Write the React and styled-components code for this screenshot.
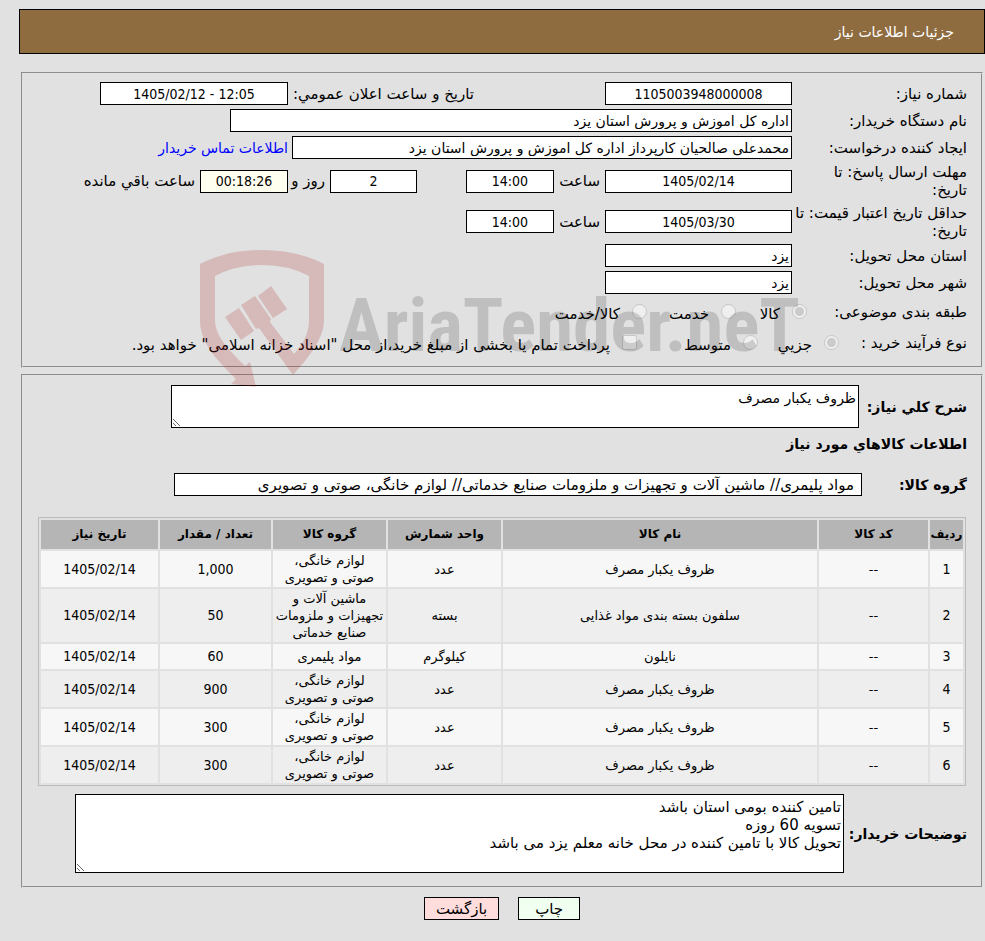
import React from "react";
import styled, { createGlobalStyle } from "styled-components";

const GlobalStyle = createGlobalStyle`
  *, *::before, *::after { box-sizing: border-box; }
  body {
    margin: 0;
    background: #e1e1e1;
    color: #000;
    font-family: "DejaVu Sans", sans-serif;
    font-size: 15px;
    line-height: 18px;
  }
  input, textarea, button { font: inherit; color: inherit; }
`;

const numeric = `"DejaVu Sans Condensed", "DejaVu Sans", sans-serif`;

const Page = styled.main`
  padding: 9px 0 21px 19px;
`;

const TitleBar = styled.h1`
  margin: 0 0 18px;
  padding: 14px 30px 12px;
  border: 1px solid #000;
  background: #8f6c40;
  color: #fff;
  font-size: 14px;
  font-weight: 400;
  line-height: 17px;
`;

const Panel = styled.fieldset`
  min-width: 0;
  margin: 0 2px 6px;
  padding: ${(p) => p.$pad};
  border: 2px groove #e1e1e1;
`;

const NeedPanel = styled(Panel)`
  position: relative;
`;

const Row = styled.div`
  display: flex;
  align-items: center;
  min-height: ${(p) => p.$h || 27}px;
`;

const Label = styled.label`
  flex: 0 0 175px;
  white-space: nowrap;
`;

const GroupName = styled.span`
  flex: 0 0 ${(p) => p.$w}px;
`;

const Field = styled.input`
  flex: 0 ${(p) => (p.$shrink ? 1 : 0)} ${(p) => p.$w}px;
  width: ${(p) => p.$w}px;
  min-width: 0;
  height: 23px;
  padding: 1px 2px;
  border: 1px solid #000;
  border-radius: 0;
  background: #fff;
  font-size: 14px;
  text-align: right;
`;

const NumberField = styled(Field)`
  background: ${(p) => (p.$warm ? "#fffff0" : "#fff")};
  font-family: ${numeric};
  text-align: center;
`;

const GroupField = styled(Field)`
  padding: 1px 7px;
  font-size: 15px;
`;

const Between = styled.label`
  flex: 0 0 ${(p) => p.$w}px;
  padding-right: 5px;
  white-space: nowrap;
`;

const Spacer = styled.span`
  flex: 0 0 ${(p) => p.$w}px;
`;

const ContactLink = styled.a`
  padding-right: 4px;
  color: #00f;
  font-size: 14px;
  text-decoration: none;
  white-space: nowrap;
`;

const Option = styled.label`
  display: flex;
  flex: 0 0 ${(p) => p.$w};
  align-items: center;
  gap: 12px;
  white-space: nowrap;

  input {
    width: 15px;
    height: 15px;
    margin: 0;
  }
  span { padding-top: 5px; }
`;

const Strong = styled.label`
  flex: 0 0 ${(p) => p.$w}px;
  font-size: 14px;
  font-weight: 700;
  white-space: nowrap;
`;

const SubHeading = styled.h2`
  margin: 7px 0 20px;
  font-size: 14px;
  font-weight: 700;
  line-height: 18px;
`;

const Area = styled.textarea`
  flex: 0 1 ${(p) => p.$w}px;
  min-width: 0;
  height: ${(p) => p.$h}px;
  padding: 3px 2px;
  border: 1px solid #000;
  background: #fff;
  font-size: ${(p) => p.$size}px;
  overflow: hidden;
`;

const Goods = styled.table`
  width: calc(100% - 1px);
  margin: 21px 1px 8px 0;
  border: 1px solid #bbb;
  border-spacing: 2px;
  table-layout: fixed;
  font-size: 13px;
  line-height: 17px;
  text-align: center;

  th {
    height: 29px;
    padding: 0;
    background: #b5b5b5;
    font-size: 12px;
    font-weight: 700;
    white-space: nowrap;
  }
  td {
    height: 25px;
    padding: 1px;
    background: #f7f7f7;
    white-space: pre-line;
  }
  tbody tr:nth-child(even) td { background: #eee; }
`;

const NumberCell = styled.td`
  font-family: ${numeric};
  font-size: 14px;
`;

const Col = styled.col`
  width: ${(p) => p.$w};
`;

const Actions = styled.div`
  display: flex;
  justify-content: center;
  gap: 19px;
  padding-top: 3px;
`;

const Action = styled.button`
  height: 23px;
  padding: 0 ${(p) => p.$pad}px;
  border: 1px solid #000;
  background: ${(p) => p.$bg};
`;

const Watermark = styled.svg`
  position: absolute;
  top: 174px;
  left: 176px;
  pointer-events: none;
`;

const appliances = "لوازم خانگی،\nصوتی و تصویری";

const goods = [
  ["ظروف یکبار مصرف", "عدد", appliances, "1,000"],
  ["سلفون بسته بندی مواد غذایی", "بسته", "ماشین آلات و\nتجهیزات و ملزومات\nصنایع خدماتی", "50"],
  ["نایلون", "کیلوگرم", "مواد پلیمری", "60"],
  ["ظروف یکبار مصرف", "عدد", appliances, "900"],
  ["ظروف یکبار مصرف", "عدد", appliances, "300"],
  ["ظروف یکبار مصرف", "عدد", appliances, "300"],
];

function Brand() {
  return (
    <Watermark width="604" height="140" viewBox="0 0 604 140" aria-hidden="true">
      <g fill="rgb(170,25,25)" fillOpacity="0.2">
        <path d="M1 16 Q28 2 63 2 Q98 2 125 16 V72 C125 92 107 112 94 127 L60 80 L57 81 L42 57 L56 48 L72 71 L71 74 L95 106 C104 96 110 86 110 72 V28 Q90 17 63 17 Q36 17 16 28 V72 C16 89 32 104 46 118 L51 114 L57 139 L32 136 L37 131 C16 110 1 94 1 72 Z" />
        <path d="M26 69 L40 60 L55 83 L42 92 Z M59 48 L72 38 L88 61 L74 70 Z" />
      </g>
      <text
        x="140"
        y="103"
        direction="ltr"
        fill="#000"
        fillOpacity="0.15"
        fontFamily="'Roboto Condensed', 'Open Sans Condensed', Roboto, sans-serif"
        fontSize="75"
        fontWeight="700"
      >
        AriaTender.neT
      </text>
    </Watermark>
  );
}

export default function App() {
  return (
    <>
      <GlobalStyle />
      <Page dir="rtl" lang="fa">
        <TitleBar>جزئیات اطلاعات نیاز</TitleBar>

        <NeedPanel $pad="6px 14px 8px 11px">
          <Row>
            <Label htmlFor="number">شماره نیاز:</Label>
            <NumberField id="number" $w={187} readOnly defaultValue="1105003948000008" />
            <Spacer $w={126} />
            <Between $w={191} htmlFor="announced">تاریخ و ساعت اعلان عمومي:</Between>
            <NumberField id="announced" dir="ltr" $w={188} readOnly defaultValue="1405/02/12 - 12:05" />
          </Row>
          <Row>
            <Label htmlFor="buyer">نام دستگاه خریدار:</Label>
            <Field id="buyer" $w={562} $shrink readOnly defaultValue="اداره کل اموزش و پرورش استان یزد" />
          </Row>
          <Row>
            <Label htmlFor="creator">ایجاد کننده درخواست:</Label>
            <Field id="creator" $w={500} $shrink readOnly defaultValue="محمدعلی صالحیان کارپرداز اداره کل اموزش و پرورش استان یزد" />
            <ContactLink href="#contact">اطلاعات تماس خریدار</ContactLink>
          </Row>
          <Row $h={40}>
            <Label htmlFor="deadline">مهلت ارسال پاسخ: تا<br />تاریخ:</Label>
            <NumberField id="deadline" $w={187} readOnly defaultValue="1405/02/14" />
            <Between $w={51} htmlFor="deadlineHour">ساعت</Between>
            <NumberField id="deadlineHour" $w={88} readOnly defaultValue="14:00" />
            <Spacer $w={49} />
            <NumberField aria-label="روز" $w={87} readOnly defaultValue="2" />
            <Between $w={42} htmlFor="remaining">روز و</Between>
            <NumberField id="remaining" $w={88} $warm readOnly defaultValue="00:18:26" />
            <Between $w={120} htmlFor="remaining">ساعت باقي مانده</Between>
          </Row>
          <Row $h={41}>
            <Label htmlFor="validity">حداقل تاریخ اعتبار قیمت: تا<br />تاریخ:</Label>
            <NumberField id="validity" $w={187} readOnly defaultValue="1405/03/30" />
            <Between $w={51} htmlFor="validityHour">ساعت</Between>
            <NumberField id="validityHour" $w={88} readOnly defaultValue="14:00" />
          </Row>
          <Row>
            <Label htmlFor="province">استان محل تحویل:</Label>
            <Field id="province" $w={187} readOnly defaultValue="یزد" />
          </Row>
          <Row>
            <Label htmlFor="city">شهر محل تحویل:</Label>
            <Field id="city" $w={187} readOnly defaultValue="یزد" />
          </Row>
          <Row $h={31}>
            <GroupName $w={160}>طبقه بندی موضوعی:</GroupName>
            <Option $w="71px"><input type="radio" name="kind" disabled defaultChecked /><span>کالا</span></Option>
            <Option $w="89px"><input type="radio" name="kind" disabled /><span>خدمت</span></Option>
            <Option $w="auto"><input type="radio" name="kind" disabled /><span>کالا/خدمت</span></Option>
          </Row>
          <Row $h={31}>
            <GroupName $w={128}>نوع فرآیند خرید :</GroupName>
            <Option $w="81px"><input type="radio" name="process" disabled defaultChecked /><span>جزیي</span></Option>
            <Option $w="121px"><input type="radio" name="process" disabled /><span>متوسط</span></Option>
            <Option $w="auto"><input type="checkbox" disabled /><span>پرداخت تمام یا بخشی از مبلغ خرید،از محل "اسناد خزانه اسلامی" خواهد بود.</span></Option>
          </Row>
          <Brand />
        </NeedPanel>

        <Panel $pad="9px 14px 13px 15px">
          <Row>
            <Strong $w={108} htmlFor="summary">شرح کلي نیاز:</Strong>
            <Area id="summary" $w={688} $h={43} $size={14} readOnly defaultValue="ظروف یکبار مصرف" />
          </Row>
          <SubHeading>اطلاعات کالاهاي مورد نیاز</SubHeading>
          <Row $h={23}>
            <Strong $w={105} htmlFor="group">گروه کالا:</Strong>
            <GroupField id="group" $w={688} $shrink readOnly defaultValue="مواد پلیمری// ماشین آلات و تجهیزات و ملزومات صنایع خدماتی// لوازم خانگی، صوتی و تصویری" />
          </Row>
          <Goods>
            <colgroup>
              <Col $w="33px" /><Col $w="109px" /><Col $w="auto" /><Col $w="113px" />
              <Col $w="113px" /><Col $w="111px" /><Col $w="117px" />
            </colgroup>
            <thead>
              <tr>
                <th>ردیف</th><th>کد کالا</th><th>نام کالا</th><th>واحد شمارش</th>
                <th>گروه کالا</th><th>تعداد / مقدار</th><th>تاریخ نیاز</th>
              </tr>
            </thead>
            <tbody>
              {goods.map(([name, unit, group, count], i) => (
                <tr key={i}>
                  <NumberCell>{i + 1}</NumberCell>
                  <td>--</td>
                  <td>{name}</td>
                  <td>{unit}</td>
                  <td>{group}</td>
                  <NumberCell>{count}</NumberCell>
                  <NumberCell>1405/02/14</NumberCell>
                </tr>
              ))}
            </tbody>
          </Goods>
          <Row>
            <Strong $w={123} htmlFor="notes">توضیحات خریدار:</Strong>
            <Area
              id="notes"
              $w={769}
              $h={79}
              $size={15}
              readOnly
              defaultValue={"تامین کننده بومی استان باشد\nتسویه 60 روزه\nتحویل کالا با تامین کننده در محل خانه معلم یزد می باشد"}
            />
          </Row>
        </Panel>

        <Actions>
          <Action type="button" $bg="#f0fff0" $pad={16}>چاپ</Action>
          <Action type="button" $bg="#ffdddd" $pad={11}>بازگشت</Action>
        </Actions>
      </Page>
    </>
  );
}
